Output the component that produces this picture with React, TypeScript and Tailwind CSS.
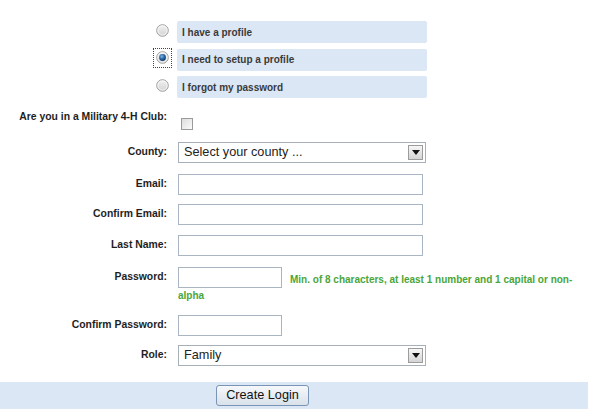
import React from "react";

function Radio({ checked }: { checked?: boolean }) {
  return (
    <svg width="13" height="13" viewBox="0 0 13 13">
      <defs>
        <linearGradient id={checked ? "rg1" : "rg0"} x1="0" y1="0" x2="0" y2="1">
          <stop offset="0" stopColor="#f2f2f2" />
          <stop offset="1" stopColor="#d2d2d2" />
        </linearGradient>
        <radialGradient id="dot" cx="0.4" cy="0.35" r="0.7">
          <stop offset="0" stopColor="#7fb6e8" />
          <stop offset="0.6" stopColor="#1f5d9c" />
          <stop offset="1" stopColor="#0c3563" />
        </radialGradient>
      </defs>
      <circle cx="6.5" cy="6.5" r="5.8" fill={`url(#${checked ? "rg1" : "rg0"})`} stroke="#9d9d9d" strokeWidth="1" />
      <circle cx="6.5" cy="6.5" r="4.6" fill="none" stroke="#fafafa" strokeWidth="0.8" />
      {checked && <circle cx="6.5" cy="6.5" r="3.4" fill="url(#dot)" />}
    </svg>
  );
}

function RadioRow({ label, checked, className = "" }: { label: string; checked?: boolean; className?: string }) {
  return (
    <div className={`flex items-center h-[22px] ${className}`}>
      <div className="w-[177px] shrink-0 flex justify-end pr-[8px]">
        {checked ? (
          <span className="flex items-center justify-center w-[19px] h-[20px] -mr-[3px] mb-[4px] border border-dotted border-[#444]">
            <Radio checked />
          </span>
        ) : (
          <span className="flex mb-[4px]">
            <Radio />
          </span>
        )}
      </div>
      <div className="w-[250px] h-[22px] bg-[#dbe7f5] rounded-[2px] flex items-center pl-[5px] text-[10px] font-bold text-[#3a3a3a]">
        {label}
      </div>
    </div>
  );
}

function Label({ children }: { children: React.ReactNode }) {
  return (
    <div className="w-[168px] shrink-0 text-right pr-[1px] pb-[2px] text-[10.4px] leading-[14px] font-bold text-[#1e1e1e]">
      {children}
    </div>
  );
}

function Arrow() {
  return (
    <span className="w-[15px] h-[15px] border border-[#9c9c9c] bg-gradient-to-b from-[#f7f7f7] to-[#d4d4d4] flex items-center justify-center">
      <svg width="8" height="5" viewBox="0 0 8 5">
        <path d="M0 0 L8 0 L4 5 Z" fill="#111" />
      </svg>
    </span>
  );
}

function Select({ value }: { value: string }) {
  return (
    <div className="w-[248px] h-[21px] border border-[#a7afb9] bg-white flex items-center pl-[5px] pr-[2px] text-[12.7px] text-[#222]">
      <span className="flex-1">{value}</span>
      <Arrow />
    </div>
  );
}

function Input({ w }: { w: string }) {
  return <input type="text" className={`block ${w} h-[21px] border border-[#a9b5c2] bg-white outline-none`} />;
}

export default function App() {
  return (
    <div className="w-[600px] h-[419px] bg-white overflow-hidden font-['Liberation_Sans',Arial,sans-serif]">
      <div className="pt-[21px]">
        <RadioRow label="I have a profile" />
        <RadioRow label="I need to setup a profile" checked className="mt-[5.5px]" />
        <RadioRow label="I forgot my password" className="mt-[5.5px]" />

        <div className="flex items-start mt-[12px]">
          <Label>Are you in a Military 4-H Club:</Label>
          <div className="ml-[13px] mt-[8px] w-[12px] h-[12px] border border-[#9a9a9a] bg-gradient-to-br from-[#dcdcdc] to-[#fbfbfb]" />
        </div>

        <div className="flex items-center mt-[12px]">
          <Label>County:</Label>
          <div className="ml-[10px]">
            <Select value="Select your county ..." />
          </div>
        </div>

        <div className="flex items-center mt-[11px]">
          <Label>Email:</Label>
          <div className="ml-[10px]">
            <Input w="w-[245px]" />
          </div>
        </div>

        <div className="flex items-center mt-[9px]">
          <Label>Confirm Email:</Label>
          <div className="ml-[10px]">
            <Input w="w-[245px]" />
          </div>
        </div>

        <div className="flex items-center mt-[10px]">
          <Label>Last Name:</Label>
          <div className="ml-[10px]">
            <Input w="w-[245px]" />
          </div>
        </div>

        <div className="flex items-start mt-[11px]">
          <div className="h-[21px] flex items-center">
            <Label>Password:</Label>
          </div>
          <div className="ml-[10px]">
            <div className="flex items-center">
              <Input w="w-[104px]" />
              <span className="ml-[8px] pt-[4px] text-[10px] font-bold text-[#4aa53a] whitespace-nowrap">
                Min. of 8 characters, at least 1 number and 1 capital or non-
              </span>
            </div>
            <div className="mt-[1px] text-[10px] leading-[14px] font-bold text-[#4aa53a]">alpha</div>
          </div>
        </div>

        <div className="flex items-center mt-[12px]">
          <Label>Confirm Password:</Label>
          <div className="ml-[10px]">
            <Input w="w-[104px]" />
          </div>
        </div>

        <div className="flex items-center mt-[9px]">
          <Label>Role:</Label>
          <div className="ml-[10px]">
            <Select value="Family" />
          </div>
        </div>

        <div className="mt-[16px] w-[588px] h-[27px] bg-[#dbe7f5] flex items-center pl-[216px]">
          <button className="w-[93px] h-[21px] rounded-[3px] border border-[#7895b5] bg-gradient-to-b from-[#f6f8fb] to-[#d9e1ea] text-[12.7px] text-[#111] leading-none">
            Create Login
          </button>
        </div>
      </div>
    </div>
  );
}
